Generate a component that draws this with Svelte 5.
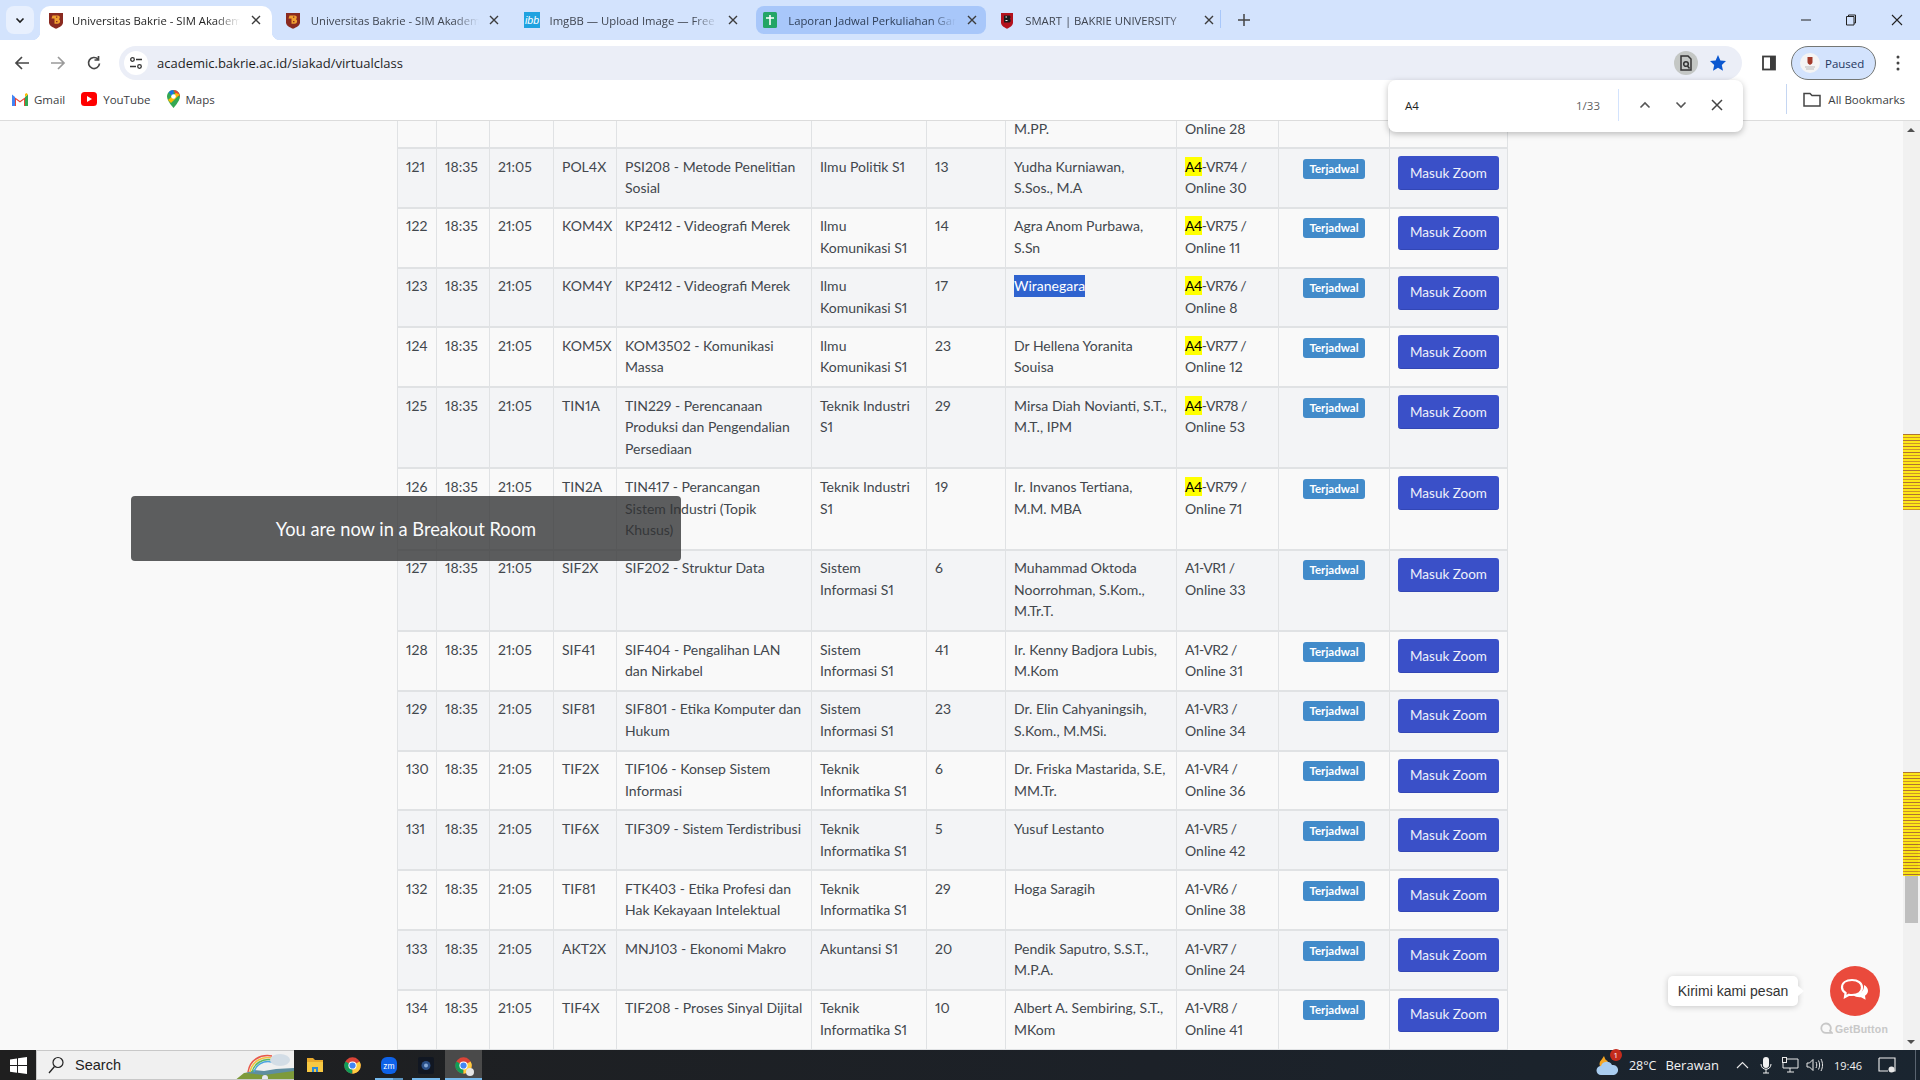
<script lang="ts">
  type Row = { no: number; kelas: string; mk: string; prodi: string; jml: number; dosen: string; ruang: string; online: string; tall?: boolean }

  const rows: Row[] = [
    { no: 121, kelas: 'POL4X', mk: 'PSI208 - Metode Penelitian\nSosial', prodi: 'Ilmu Politik S1', jml: 13, dosen: 'Yudha Kurniawan,\nS.Sos., M.A', ruang: 'A4-VR74', online: 'Online 30' },
    { no: 122, kelas: 'KOM4X', mk: 'KP2412 - Videografi Merek', prodi: 'Ilmu\nKomunikasi S1', jml: 14, dosen: 'Agra Anom Purbawa,\nS.Sn', ruang: 'A4-VR75', online: 'Online 11' },
    { no: 123, kelas: 'KOM4Y', mk: 'KP2412 - Videografi Merek', prodi: 'Ilmu\nKomunikasi S1', jml: 17, dosen: 'Wiranegara', ruang: 'A4-VR76', online: 'Online 8' },
    { no: 124, kelas: 'KOM5X', mk: 'KOM3502 - Komunikasi\nMassa', prodi: 'Ilmu\nKomunikasi S1', jml: 23, dosen: 'Dr Hellena Yoranita\nSouisa', ruang: 'A4-VR77', online: 'Online 12' },
    { no: 125, kelas: 'TIN1A', mk: 'TIN229 - Perencanaan\nProduksi dan Pengendalian\nPersediaan', prodi: 'Teknik Industri\nS1', jml: 29, dosen: 'Mirsa Diah Novianti, S.T.,\nM.T., IPM', ruang: 'A4-VR78', online: 'Online 53', tall: true },
    { no: 126, kelas: 'TIN2A', mk: 'TIN417 - Perancangan\nSistem Industri (Topik\nKhusus)', prodi: 'Teknik Industri\nS1', jml: 19, dosen: 'Ir. Invanos Tertiana,\nM.M. MBA', ruang: 'A4-VR79', online: 'Online 71', tall: true },
    { no: 127, kelas: 'SIF2X', mk: 'SIF202 - Struktur Data', prodi: 'Sistem\nInformasi S1', jml: 6, dosen: 'Muhammad Oktoda\nNoorrohman, S.Kom.,\nM.Tr.T.', ruang: 'A1-VR1', online: 'Online 33', tall: true },
    { no: 128, kelas: 'SIF41', mk: 'SIF404 - Pengalihan LAN\ndan Nirkabel', prodi: 'Sistem\nInformasi S1', jml: 41, dosen: 'Ir. Kenny Badjora Lubis,\nM.Kom', ruang: 'A1-VR2', online: 'Online 31' },
    { no: 129, kelas: 'SIF81', mk: 'SIF801 - Etika Komputer dan\nHukum', prodi: 'Sistem\nInformasi S1', jml: 23, dosen: 'Dr. Elin Cahyaningsih,\nS.Kom., M.MSi.', ruang: 'A1-VR3', online: 'Online 34' },
    { no: 130, kelas: 'TIF2X', mk: 'TIF106 - Konsep Sistem\nInformasi', prodi: 'Teknik\nInformatika S1', jml: 6, dosen: 'Dr. Friska Mastarida, S.E,\nMM.Tr.', ruang: 'A1-VR4', online: 'Online 36' },
    { no: 131, kelas: 'TIF6X', mk: 'TIF309 - Sistem Terdistribusi', prodi: 'Teknik\nInformatika S1', jml: 5, dosen: 'Yusuf Lestanto', ruang: 'A1-VR5', online: 'Online 42' },
    { no: 132, kelas: 'TIF81', mk: 'FTK403 - Etika Profesi dan\nHak Kekayaan Intelektual', prodi: 'Teknik\nInformatika S1', jml: 29, dosen: 'Hoga Saragih', ruang: 'A1-VR6', online: 'Online 38' },
    { no: 133, kelas: 'AKT2X', mk: 'MNJ103 - Ekonomi Makro', prodi: 'Akuntansi S1', jml: 20, dosen: 'Pendik Saputro, S.S.T.,\nM.P.A.', ruang: 'A1-VR7', online: 'Online 24' },
    { no: 134, kelas: 'TIF4X', mk: 'TIF208 - Proses Sinyal Dijital', prodi: 'Teknik\nInformatika S1', jml: 10, dosen: 'Albert A. Sembiring, S.T.,\nMKom', ruang: 'A1-VR8', online: 'Online 41' },
  ]

  const tabs = [
    { title: 'Universitas Bakrie - SIM Akademik', icon: 'bakrie', active: true },
    { title: 'Universitas Bakrie - SIM Akademik', icon: 'bakrie' },
    { title: 'ImgBB — Upload Image — Free', icon: 'imgbb' },
    { title: 'Laporan Jadwal Perkuliahan Ganjil', icon: 'sheet', group: true },
    { title: 'SMART | BAKRIE UNIVERSITY', icon: 'smart' },
  ]
</script>

{#snippet chromeIcon(size)}
  <svg width={size} height={size} viewBox="0 0 24 24">
    <circle cx="12" cy="12" r="11.500" fill="#db4437" />
    <path d="M12 12 L2 17.800 A11.500 11.500 0 0 1 2 6.200 Z" fill="#0f9d58" />
    <path d="M12 12 L2 17.800 A11.500 11.500 0 0 0 12 23.500 Z" fill="#0f9d58" />
    <path d="M12 12 L22 6.200 A11.500 11.500 0 0 1 12 23.500 Z" fill="#ffcd40" />
    <circle cx="12" cy="12" r="5.800" fill="#fff" />
    <circle cx="12" cy="12" r="4.400" fill="#4285f4" />
  </svg>
{/snippet}

<div class="screen">
  <header class="tabstrip">
    <button class="tabsearch" aria-label="Search tabs">
      <svg width="12" height="12" viewBox="0 0 12 12"><path d="M2.500 4.500 6 8l3.500-3.500" fill="none" stroke="#1f1f1f" stroke-width="1.600" /></svg>
    </button>
    <div class="tabs">
      {#each tabs as tab}
        <div class="tab" class:active={tab.active} class:group={tab.group}>
          <span class="favicon">
            {#if tab.icon === 'bakrie'}
              <svg width="16" height="17" viewBox="0 0 16 17"><path d="M1 1h14v9.500c0 3-3.500 4.800-7 6.300-3.500-1.500-7-3.300-7-6.300z" fill="#8a2a20" /><path d="M4.500 3.500h5.200c1.500 0 2.100.9 2.100 2 0 .9-.4 1.500-1 1.800.8.300 1.300 1 1.300 1.900 0 1.500-1 2.500-2.500 2.500H6.500V6.500H3.500z" fill="#f0a030" /><path d="M8 5.200h1.300M8 9.700h1.500" stroke="#8a2a20" stroke-width="1.300" /></svg>
            {:else if tab.icon === 'imgbb'}
              <svg width="16" height="16" viewBox="0 0 16 16"><rect width="16" height="16" fill="#1fa2e0" /><text x="8" y="12" text-anchor="middle" font-family="Liberation Sans" font-style="italic" font-size="10.500" fill="#fff">ibb</text></svg>
            {:else if tab.icon === 'sheet'}
              <svg width="16" height="16" viewBox="0 0 16 16"><rect x="1" width="14" height="16" rx="1.500" fill="#23a566" /><path d="M8 3v10M4 6h8" stroke="#fff" stroke-width="1.600" /></svg>
            {:else}
              <svg width="16" height="17" viewBox="0 0 16 17"><path d="M2 1h12v9.500c0 3-3 4.800-6 6.300-3-1.500-6-3.300-6-6.300z" fill="#b3121d" /><path d="M5 3.500h5c1 0 1.500.7 1.500 1.700 0 .7-.3 1.200-.8 1.500.6.300 1 .9 1 1.700 0 1.300-.8 2.100-2 2.100H5z" fill="#1c1c1c" /><path d="M6.500 5h1.500M6.500 8.500h2" stroke="#f5f5f5" stroke-width="1.200" /></svg>
            {/if}
          </span>
          <span class="title">{tab.title}</span>
          <svg class="close" width="10" height="10" viewBox="0 0 10 10"><path d="M1 1l8 8M9 1l-8 8" stroke="#3c3c3c" stroke-width="1.400" /></svg>
        </div>
      {/each}
      <span class="tabsep"></span>
      <svg class="newtab" width="12" height="12" viewBox="0 0 12 12"><path d="M6 0v12M0 6h12" stroke="#444" stroke-width="1.500" /></svg>
    </div>
    <div class="winctl">
      <svg width="10" height="10" viewBox="0 0 10 10"><path d="M0 5h10" stroke="#222" /></svg>
      <svg width="12" height="12" viewBox="0 0 12 12"><path d="M3.500 2.500V1h7v8H9M1.500 2.500h7.500V11H1.500z" fill="none" stroke="#222" /></svg>
      <svg width="12" height="12" viewBox="0 0 12 12"><path d="M1 1l10 10M11 1L1 11" stroke="#222" stroke-width="1.100" /></svg>
    </div>
  </header>

  <div class="toolbar">
    <svg class="nav" width="16" height="16" viewBox="0 0 16 16"><path d="M15 8H2M8 2 2 8l6 6" fill="none" stroke="#474747" stroke-width="1.700" /></svg>
    <svg class="nav" width="16" height="16" viewBox="0 0 16 16"><path d="M1 8h13M8 2l6 6-6 6" fill="none" stroke="#9a9a9a" stroke-width="1.700" /></svg>
    <svg class="nav" width="16" height="16" viewBox="0 0 16 16"><path d="M13.500 8.500A5.500 5.500 0 1 1 12 4.200M12.500 1v4h-4" fill="none" stroke="#474747" stroke-width="1.700" /></svg>
    <div class="omnibox">
      <span class="siteinfo">
        <svg width="14" height="14" viewBox="0 0 14 14"><circle cx="3.500" cy="3.500" r="1.800" fill="none" stroke="#333" stroke-width="1.300" /><path d="M7 3.500h6M1 10.500h6" stroke="#333" stroke-width="1.300" /><circle cx="10.500" cy="10.500" r="1.800" fill="none" stroke="#333" stroke-width="1.300" /></svg>
      </span>
      <span class="url">academic.bakrie.ac.id/siakad/virtualclass</span>
      <span class="lens">
        <svg width="14" height="16" viewBox="0 0 14 16"><path d="M2 1h7l3 3v11H2z" fill="none" stroke="#333" stroke-width="1.500" /><circle cx="7" cy="9" r="2.300" fill="none" stroke="#333" stroke-width="1.500" /><path d="M8.500 11l2 2.500" stroke="#333" stroke-width="1.500" /></svg>
      </span>
      <svg class="star" width="18" height="18" viewBox="0 0 18 18"><path d="m9 1 2.400 5.400 5.600.6-4.200 3.900 1.200 5.800L9 13.800l-5 2.900 1.200-5.800L1 7l5.600-.6z" fill="#0b57d0" /></svg>
    </div>
    <svg class="panel" width="16" height="16" viewBox="0 0 16 16"><rect x="2" y="1.500" width="12" height="13" fill="none" stroke="#3c3c3c" stroke-width="1.800" /><rect x="9" y="1.500" width="5" height="13" fill="#3c3c3c" /></svg>
    <div class="paused">
      <span class="avatar"><svg width="12" height="14" viewBox="0 0 12 14"><path d="M3.500 1h5v5c0 1.500-1 2-2.500 3C4.500 8 3.500 7.500 3.500 6z" fill="#a33a2a" /><path d="M1 11h10M2 13h8" stroke="#bbb" /></svg></span>
      <span>Paused</span>
    </div>
    <svg class="kebab" width="4" height="16" viewBox="0 0 4 16"><circle cx="2" cy="2" r="1.500" fill="#444" /><circle cx="2" cy="8" r="1.500" fill="#444" /><circle cx="2" cy="14" r="1.500" fill="#444" /></svg>
  </div>

  <nav class="bookmarks">
    <span class="bm">
      <svg width="16" height="13" viewBox="0 0 16 13"><path d="M1 13V3l7 5 7-5v10h-3V6.500L8 9.500 4 6.500V13z" fill="#ea4335" /><path d="M0 1.500 0 13h3V4z" fill="#4285f4" /><path d="M16 1.500V13h-3V4z" fill="#34a853" /><path d="M13 4l3-2.500L14.500 0 13 1z" fill="#fbbc04" /></svg>
      Gmail
    </span>
    <span class="bm">
      <svg width="16" height="14" viewBox="0 0 16 14"><rect width="16" height="14" rx="3.500" fill="#f00" /><path d="m6 4 5 3-5 3z" fill="#fff" /></svg>
      YouTube
    </span>
    <span class="bm">
      <svg width="13" height="18" viewBox="0 0 13 18"><path d="M6.500 0C2.900 0 0 2.900 0 6.500 0 11 6.500 18 6.500 18S13 11 13 6.500C13 2.900 10.100 0 6.500 0z" fill="#34a853" /><path d="M1.700 2.200A6.500 6.500 0 0 1 6.500 0v4.200L4.500 5.500z" fill="#1a73e8" /><path d="M6.500 0A6.500 6.500 0 0 1 13 6.500L9 5z" fill="#ea4335" /><path d="M1 10l8-7 3.700 1.500L4 13z" fill="#fbbc04" /><circle cx="6.500" cy="6.500" r="2.300" fill="#fff" /></svg>
      Maps
    </span>
    <span class="allbm">
      <svg width="18" height="15" viewBox="0 0 18 15"><path d="M1 1.500h6l2 2h8v10.500H1z" fill="none" stroke="#444" stroke-width="1.500" /></svg>
      All Bookmarks
    </span>
  </nav>

  <main class="page">
    <div class="sheet">
      <table>
        <colgroup>
          <col class="c1" /><col class="c2" /><col class="c3" /><col class="c4" /><col class="c5" /><col class="c6" /><col class="c7" /><col class="c8" /><col class="c9" /><col class="c10" /><col class="c11" />
        </colgroup>
        <tbody>
          <tr class="cut">
            <td></td><td></td><td></td><td></td><td></td><td></td><td></td><td>M.PP.</td><td>Online 28</td><td></td><td></td>
          </tr>
          {#each rows as r}
            <tr class:tall={r.tall} class:odd={r.no % 2 === 1}>
              <td>{r.no}</td>
              <td>18:35</td>
              <td>21:05</td>
              <td>{r.kelas}</td>
              <td>{r.mk}</td>
              <td>{r.prodi}</td>
              <td>{r.jml}</td>
              <td>{#if r.dosen === 'Wiranegara'}<span class="selected">{r.dosen}</span>{:else}{r.dosen}{/if}</td>
              <td><span class="room">{#if r.ruang.startsWith('A4')}<mark>A4</mark>{r.ruang.slice(2)}{:else}{r.ruang}{/if} /</span>{'\n'}{r.online}</td>
              <td class="status"><span class="badge">Terjadwal</span></td>
              <td class="action"><button class="zoom">Masuk Zoom</button></td>
            </tr>
          {/each}
        </tbody>
      </table>
    </div>
    <div class="scrollbar">
      <span class="arrow up"></span>
      <span class="thumb"></span>
      <span class="ticks first"></span>
      <span class="ticks second"></span>
      <span class="arrow down"></span>
    </div>

    <div class="toast">You are now in a Breakout Room</div>

    <div class="chat">
      <div class="chatrow">
        <div class="bubble">Kirimi kami pesan</div>
        <button class="chatbtn" aria-label="Chat">
          <svg width="30" height="26" viewBox="0 0 30 26">
            <path d="M24 7c2.500 1.300 4 3.300 4 5.700 0 2-1.200 3.800-3 5l.6 4-4.600-2.500c-3 .3-6-.5-8-2.200 5.500.3 11.500-3 11-10z" fill="#fff" />
            <path d="M12 2c6 0 10 3 10 7.500S18 17 12 17c-1 0-2 0-3-.3L5 19l.6-4C3.400 13.600 2 11.700 2 9.500 2 5 6 2 12 2z" fill="none" stroke="#fff" stroke-width="2.200" />
          </svg>
        </button>
      </div>
      <div class="getbutton">
        <svg width="13" height="13" viewBox="0 0 13 13"><path d="M6 1.500a4.700 4.700 0 1 0 0 9.400h6L10 8.800A4.700 4.700 0 0 0 6 1.500z" fill="none" stroke="#c8c8c8" stroke-width="1.800" /></svg>
        GetButton
      </div>
    </div>
  </main>

  <div class="findbar">
    <span class="query">A4</span>
    <span class="count">1/33</span>
    <span class="findsep"></span>
    <svg width="12" height="8" viewBox="0 0 12 8"><path d="m1.500 6.500 4.500-4.500 4.500 4.500" fill="none" stroke="#555" stroke-width="1.600" /></svg>
    <svg width="12" height="8" viewBox="0 0 12 8"><path d="m1.500 1.500 4.500 4.500 4.500-4.500" fill="none" stroke="#555" stroke-width="1.600" /></svg>
    <svg width="12" height="12" viewBox="0 0 12 12"><path d="M1 1l10 10M11 1L1 11" stroke="#444" stroke-width="1.500" /></svg>
  </div>

  <footer class="taskbar">
    <span class="start">
      <svg width="17" height="17" viewBox="0 0 17 17"><path d="M0 2.400 7 1.400v6.700H0zM8 1.300 17 0v8.100H8zM0 9h7v6.700l-7-1zM8 9h9v8l-9-1.300z" fill="#fff" /></svg>
    </span>
    <div class="search">
      <svg width="16" height="18" viewBox="0 0 16 18"><circle cx="10" cy="6.500" r="5" fill="none" stroke="#222" stroke-width="1.200" /><path d="M6.500 10.500 1 17" stroke="#222" stroke-width="1.300" /></svg>
      <span>Search</span>
      <svg class="rainbow" width="60" height="30" viewBox="0 0 60 30">
        <path d="M0 30 10 22l14-2 12 2 24-4v12z" fill="#7d9a3a" />
        <path d="M12 22l8-3 10 1 12-2 18-1v3l-30 4z" fill="#5f8ea0" />
        <path d="M14 21C16 9 26 3 38 5" fill="none" stroke="#e8584a" stroke-width="1.500" />
        <path d="M16 21C18 11 27 5 38 7" fill="none" stroke="#f2c23e" stroke-width="1.500" />
        <path d="M18 21C20 13 28 7 38 9" fill="none" stroke="#5db860" stroke-width="1.500" />
        <path d="M20 21C22 14 29 9 38 11" fill="none" stroke="#4aa3df" stroke-width="1.500" />
        <ellipse cx="46" cy="9" rx="10" ry="6" fill="#d3dde6" />
        <circle cx="31" cy="27" r="3" fill="#e8e8f2" />
      </svg>
    </div>
    <div class="apps">
      <span class="app">
        <svg width="18" height="18" viewBox="0 0 18 18"><path d="M1 2h6l2 2h8v3H1z" fill="#e8a92c" /><path d="M1 6h16v10H1z" fill="#f7c842" /><path d="M6 16v-5h6v5h-2v-3H8v3z" fill="#2b8ad8" /></svg>
      </span>
      <span class="app">{@render chromeIcon(17)}</span>
      <span class="app on">
        <svg width="16" height="17" viewBox="0 0 16 17"><rect width="16" height="17" rx="6" fill="#0e62e8" /><text x="8" y="11.500" text-anchor="middle" font-family="Liberation Sans" font-size="8.500" fill="#fff">zm</text></svg>
      </span>
      <span class="app on">
        <svg width="16" height="17" viewBox="0 0 16 17"><rect width="16" height="17" rx="2" fill="#111722" /><circle cx="8" cy="8.500" r="4.500" fill="#2a4f86" /><circle cx="8" cy="8.500" r="2" fill="#86a9d6" /></svg>
      </span>
      <span class="app on current">
        {@render chromeIcon(17)}
        <span class="dot"></span>
      </span>
    </div>
    <div class="tray">
      <span class="weather">
        <svg width="26" height="24" viewBox="0 0 26 24"><path d="M5 9 9 3l2 5z" fill="#f5a623" /><circle cx="9" cy="11" r="4.500" fill="#f5a623" /><path d="M6 22a4.500 4.500 0 0 1 0-9 6 6 0 0 1 11-1 5 5 0 0 1 2 10z" fill="#a9cdf0" /></svg>
        <span class="wbadge">1</span>
      </span>
      <span class="temp">28°C</span>
      <span class="cond">Berawan</span>
      <svg class="caret" width="13" height="8" viewBox="0 0 13 8"><path d="m1 7 5.500-5.500L12 7" fill="none" stroke="#e8e8e8" stroke-width="1.100" /></svg>
      <svg class="mic" width="12" height="17" viewBox="0 0 12 17"><rect x="3" width="6" height="11" rx="3" fill="#f2f2f2" /><path d="M1 7c0 7 10 7 10 0M6 12v4M3 16h6" fill="none" stroke="#f2f2f2" /></svg>
      <svg class="net" width="17" height="16" viewBox="0 0 17 16"><path d="M5 2h11v9H1V6M8 11v4M5 15h7" fill="none" stroke="#e8e8e8" /><rect x=".5" y=".5" width="4" height="5" fill="#1c2127" stroke="#e8e8e8" /></svg>
      <svg class="vol" width="17" height="14" viewBox="0 0 17 14"><path d="M1 5h2.500L7 1.500v11L3.500 9H1zM10 4c1 2 1 4 0 6M12.500 2.500c1.500 3 1.500 6 0 9M15 1c2 4 2 8 0 12" fill="none" stroke="#e8e8e8" /></svg>
      <span class="clock">19:46</span>
      <svg class="notif" width="18" height="16" viewBox="0 0 18 16"><path d="M1 1h16v13h-4M10 14H1V1" fill="none" stroke="#f0f0f0" stroke-width="1.100" /><circle cx="13.500" cy="12.500" r="3" fill="#e8e8e8" /></svg>
      <span class="peek"></span>
    </div>
  </footer>
</div>

<style>
  :global(body) {
    margin: 0;
    overflow: hidden;
  }
  .screen {
    width: 1920px;
    height: 1080px;
    display: flex;
    flex-direction: column;
    position: relative;
    overflow: hidden;
    font-family: 'Open Sans', sans-serif;
    color: #3c4043;
  }

  .tabstrip {
    height: 40px;
    flex: none;
    background: #d3e3fd;
    display: flex;
    position: relative;
  }
  .tabsearch {
    width: 28px;
    height: 28px;
    margin: 6px 6px 0;
    padding: 0;
    border: 0;
    border-radius: 8px;
    background: #e8f0fe;
    display: flex;
    align-items: center;
    justify-content: center;
  }
  .tabs {
    display: flex;
    align-items: flex-start;
    padding-top: 6px;
    gap: 7px;
  }
  .tab {
    width: 231.750px;
    height: 28px;
    padding-left: 6px;
    box-sizing: border-box;
    display: flex;
    align-items: center;
    font-size: 11.300px;
    color: #3f4550;
    border-radius: 8px;
    position: relative;
    flex: none;
  }
  .tab.active {
    height: 34px;
    padding-left: 8px;
    padding-bottom: 6px;
    background: #fff;
    border-radius: 10px 10px 0 0;
    color: #1f1f1f;
  }
  .tab.active::before,
  .tab.active::after {
    content: '';
    position: absolute;
    bottom: 0;
    width: 8px;
    height: 8px;
  }
  .tab.active::before {
    left: -8px;
    background: radial-gradient(circle at 0 0, transparent 8px, #fff 8.500px);
  }
  .tab.active::after {
    right: -8px;
    background: radial-gradient(circle at 100% 0, transparent 8px, #fff 8.500px);
  }
  .tab.group {
    background: #a8c7fa;
    width: 230px;
    color: #30405a;
  }
  .favicon {
    width: 16px;
    height: 16px;
    flex: none;
    display: flex;
  }
  .title {
    margin-left: 10px;
    width: 168px;
    white-space: nowrap;
    overflow: hidden;
    mask-image: linear-gradient(to right, #000 85%, transparent);
  }
  .tab.active .title {
    margin-left: 8px;
  }
  .close {
    margin-left: 10.500px;
    flex: none;
  }
  .tabsep {
    width: 1px;
    height: 18px;
    margin: 4px 0 0 -12px;
    background: #a8c7fa;
  }
  .newtab {
    margin: 8px 0 0 10px;
  }
  .winctl {
    margin-left: auto;
    display: flex;
    align-items: center;
    gap: 34px;
    padding: 0 17px 0 0;
    height: 40px;
  }

  .toolbar {
    height: 40px;
    flex: none;
    background: #fff;
    border-radius: 8px 8px 0 0;
    display: flex;
    align-items: flex-start;
    position: relative;
    margin-top: 0;
    padding-top: 6px;
    box-sizing: border-box;
  }
  .nav {
    margin: 9px 0 0 14px;
    flex: none;
  }
  .nav + .nav {
    margin-left: 20px;
  }
  .omnibox {
    margin-left: 17px;
    width: 1623px;
    height: 34px;
    border-radius: 17px;
    background: #ebeef7;
    display: flex;
    align-items: center;
    flex: none;
    font-size: 13px;
    color: #1f1f1f;
  }
  .siteinfo {
    width: 24px;
    height: 24px;
    margin-left: 5px;
    border-radius: 50%;
    background: #fff;
    display: flex;
    align-items: center;
    justify-content: center;
  }
  .url {
    margin-left: 9px;
  }
  .lens {
    width: 24px;
    height: 24px;
    margin-left: auto;
    border-radius: 50%;
    background: #c4c7c5;
    display: flex;
    align-items: center;
    justify-content: center;
  }
  .star {
    margin: 0 15px 0 11px;
  }
  .panel {
    margin: 9px 0 0 19px;
    flex: none;
  }
  .paused {
    margin-left: 14px;
    width: 85px;
    height: 34px;
    box-sizing: border-box;
    border: 1px solid #747775;
    border-radius: 17px;
    background: #d3e3fd;
    display: flex;
    align-items: center;
    font-size: 11.500px;
    color: #1f3760;
    flex: none;
  }
  .avatar {
    width: 20px;
    height: 20px;
    margin: 0 5px 0 8px;
    border-radius: 50%;
    background: #f4f4f4;
    display: flex;
    align-items: center;
    justify-content: center;
  }
  .kebab {
    margin: 9px 0 0 20px;
    flex: none;
  }

  .bookmarks {
    height: 41px;
    flex: none;
    box-sizing: border-box;
    background: #fff;
    border-bottom: 1px solid #dcdcdc;
    display: flex;
    align-items: center;
    font-size: 11.500px;
    color: #3c4043;
    padding: 0 0 2px 12px;
  }
  .bm {
    display: flex;
    align-items: center;
    gap: 6px;
    margin-right: 16px;
  }
  .allbm {
    margin-left: auto;
    display: flex;
    align-items: center;
    gap: 7px;
    padding: 0 15px 0 16px;
    border-left: 1px solid #c5d6f2;
    height: 30px;
  }

  .page {
    flex: 1;
    display: flex;
    min-height: 0;
    position: relative;
    background: #f9f9f9;
  }
  .sheet {
    flex: 1;
    padding-left: 397px;
    overflow: hidden;
  }
  table {
    table-layout: fixed;
    width: 1110px;
    border-collapse: collapse;
    font-family: Lato, sans-serif;
    font-size: 14px;
    font-variant-numeric: proportional-nums;
    line-height: 21.600px;
    color: #42474d;
  }
  .c1 { width: 39px; }
  .c2 { width: 53px; }
  .c3 { width: 64px; }
  .c4 { width: 63px; }
  .c5 { width: 195px; }
  .c6 { width: 115px; }
  .c7 { width: 79px; }
  .c8 { width: 171px; }
  .c9 { width: 102px; }
  .c10 { width: 111px; }
  .c11 { width: 118px; }
  td {
    border: 1px solid #e0e2e4;
    border-top-width: 2px;
    padding: 6.500px 8px 0;
    vertical-align: top;
    white-space: pre;
    box-sizing: border-box;
  }
  tr {
    height: 59.800px;
  }
  tr.tall {
    height: 81.300px;
  }
  tr.odd {
    background: #f3f4f6;
  }
  tr.cut {
    height: 27px;
  }
  tr.cut td {
    border-top: 0;
    padding: 0 8px;
    line-height: 16px;
  }
  mark {
    background: #ffff00;
    color: #000;
    display: inline-block;
    line-height: 19px;
  }
  .room {
    letter-spacing: -0.500px;
  }
  .selected {
    background: #2f63cf;
    color: #fff;
    display: inline-block;
  }
  .status {
    text-align: center;
    padding: 9.500px 0 0;
    line-height: 0;
  }
  .badge {
    display: inline-block;
    width: 62px;
    height: 20px;
    border-radius: 3px;
    background: #428bca;
    color: #fff;
    font-size: 11.500px;
    font-weight: 700;
    line-height: 19px;
    text-align: center;
  }
  .action {
    padding: 7px 8px 0;
    line-height: 0;
  }
  .zoom {
    width: 101px;
    height: 34px;
    padding: 0;
    border: 0;
    border-bottom: 1px solid #3246b5;
    border-radius: 3px;
    background: #3a50c8;
    color: #eef0fb;
    font-family: Lato, sans-serif;
    font-size: 13.500px;
  }

  .scrollbar {
    width: 17px;
    flex: none;
    background: #f1f1f1;
    position: relative;
  }
  .arrow {
    position: absolute;
    left: 4px;
    border-left: 4px solid transparent;
    border-right: 4px solid transparent;
  }
  .arrow.up {
    top: 7px;
    border-bottom: 4px solid #505050;
  }
  .arrow.down {
    bottom: 6px;
    border-top: 4px solid #505050;
  }
  .thumb {
    position: absolute;
    left: 2px;
    top: 722px;
    width: 13px;
    height: 80px;
    background: #bfbfbf;
  }
  .ticks {
    position: absolute;
    left: 0;
    right: 0;
    opacity: 0.9;
    background: repeating-linear-gradient(to bottom, #a9661d 0 1px, #ffe600 1px 3px, #c98a14 3px 4px, #ffe600 4px 6px);
  }
  .ticks.first {
    top: 313px;
    height: 76px;
  }
  .ticks.second {
    top: 651px;
    height: 104px;
  }

  .toast {
    position: absolute;
    left: 131px;
    top: 375px;
    width: 550px;
    height: 65px;
    border-radius: 4px;
    background: rgba(50, 51, 52, 0.79);
    color: #fafbfc;
    font-family: Lato, sans-serif;
    font-weight: 400;
    font-size: 18.300px;
    display: flex;
    align-items: center;
    justify-content: center;
  }

  .chat {
    position: absolute;
    right: 40px;
    bottom: 15px;
    display: flex;
    flex-direction: column;
    align-items: flex-end;
  }
  .chatrow {
    display: flex;
    align-items: center;
    gap: 32px;
  }
  .bubble {
    width: 130px;
    height: 30px;
    border-radius: 5px;
    background: #fff;
    box-shadow: 0 1px 6px rgba(0, 0, 0, 0.2);
    font-family: 'Liberation Sans', sans-serif;
    font-size: 14px;
    color: #333;
    line-height: 30px;
    text-align: center;
    position: relative;
  }
  .bubble::after {
    content: '';
    position: absolute;
    right: -6px;
    top: 10px;
    border-left: 6px solid #fff;
    border-top: 5px solid transparent;
    border-bottom: 5px solid transparent;
  }
  .chatbtn {
    width: 50px;
    height: 50px;
    padding: 0;
    border: 0;
    border-radius: 50%;
    background: #ea4a3c;
    display: flex;
    align-items: center;
    justify-content: center;
  }
  .getbutton {
    display: flex;
    align-items: center;
    gap: 2px;
    margin: 6px -8px 0 0;
    font-family: 'Liberation Sans', sans-serif;
    font-size: 10.500px;
    font-weight: 700;
    letter-spacing: 0.200px;
    color: #c8c8c8;
    white-space: nowrap;
  }
  .getbutton svg {
    flex: none;
  }

  .findbar {
    position: absolute;
    left: 1388px;
    top: 80px;
    width: 355px;
    height: 52px;
    box-sizing: border-box;
    background: #fff;
    border-radius: 8px;
    box-shadow: 0 2px 6px rgba(0, 0, 0, 0.25);
    display: flex;
    align-items: center;
    font-size: 11.500px;
    color: #1f1f1f;
    padding: 0 20px 2px 17px;
  }
  .query {
    flex: 1;
  }
  .count {
    color: #5f5f5f;
  }
  .findsep {
    width: 1px;
    height: 32px;
    margin: 0 20px 0 18px;
    background: #d3e3fd;
  }
  .findbar svg + svg {
    margin-left: 24px;
  }

  .taskbar {
    height: 30px;
    flex: none;
    background: linear-gradient(to right, #1f1f1f, #1c2128 60%, #1a2530);
    display: flex;
    color: #f2f2f2;
    font-size: 13px;
  }
  .start {
    width: 36px;
    display: flex;
    align-items: center;
    justify-content: center;
    flex: none;
  }
  .search {
    width: 258px;
    box-sizing: border-box;
    background: #f0f0f0;
    border: 1px solid #c8c8c8;
    border-width: 1px 0 1px 1px;
    display: flex;
    align-items: center;
    color: #222;
    font-family: 'Liberation Sans', sans-serif;
    font-size: 14.500px;
    padding-left: 11px;
    gap: 11px;
    position: relative;
    overflow: hidden;
  }
  .rainbow {
    position: absolute;
    right: 0;
    top: 0;
  }
  .apps {
    display: flex;
    padding-left: 2.500px;
  }
  .app {
    width: 37px;
    height: 30px;
    box-sizing: border-box;
    display: flex;
    align-items: center;
    justify-content: center;
    position: relative;
    flex: none;
  }
  .app.on::after {
    content: '';
    position: absolute;
    left: 4.500px;
    right: 4.500px;
    bottom: 0;
    height: 2px;
    background: linear-gradient(to right, #76b9ed 65%, #5b93be 65%);
  }
  .app.on + .app.on::after {
    background: #76b9ed;
  }
  .app.current {
    background: #4a4a4a;
  }
  .app.current::after {
    left: 0;
    right: 0;
  }
  .dot {
    position: absolute;
    left: 21px;
    top: 18px;
    width: 8px;
    height: 8px;
    border-radius: 50%;
    background: #e6e6e6;
  }
  .tray {
    margin-left: auto;
    display: flex;
    align-items: center;
    font-family: 'Open Sans', sans-serif;
    font-size: 12.500px;
  }
  .weather {
    position: relative;
    display: flex;
    margin-right: 8px;
  }
  .wbadge {
    position: absolute;
    right: -1px;
    top: -4px;
    width: 12px;
    height: 12px;
    border-radius: 50%;
    background: #c42b1c;
    font-size: 8px;
    line-height: 12px;
    text-align: center;
    color: #fff;
  }
  .cond {
    margin-left: 9px;
    font-size: 13px;
  }
  .caret {
    margin-left: 17px;
  }
  .mic {
    margin-left: 11px;
  }
  .net {
    margin-left: 10px;
  }
  .vol {
    margin-left: 7px;
  }
  .clock {
    margin-left: 11px;
    font-size: 11px;
  }
  .notif {
    margin-left: 16px;
  }
  .peek {
    width: 1px;
    height: 30px;
    margin-left: 19px;
    margin-right: 4px;
    background: #5a6470;
  }
</style>
